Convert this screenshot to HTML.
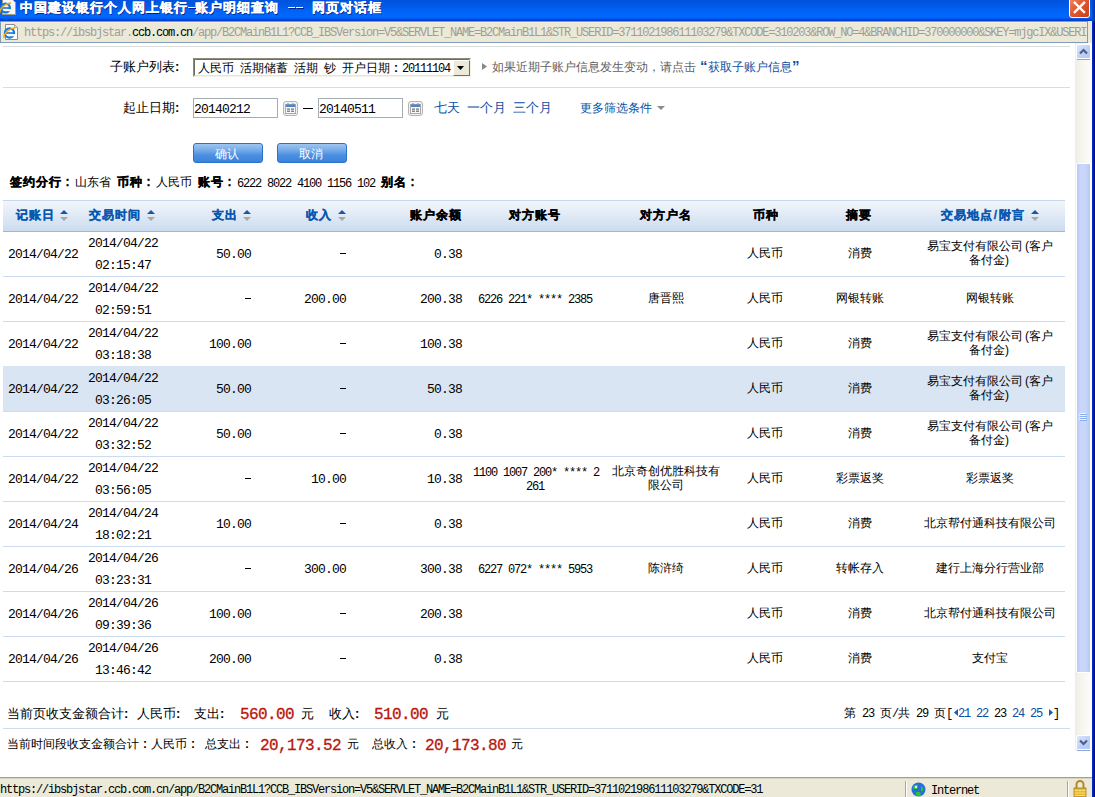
<!DOCTYPE html>
<html><head><meta charset="utf-8"><style>
*{margin:0;padding:0;box-sizing:border-box}
html,body{width:1095px;height:797px;overflow:hidden;background:#fff}
body{position:relative;font-family:'Liberation Sans',sans-serif}
div,span,svg{position:absolute}
span{white-space:pre;line-height:20px;height:20px}
.c{font-size:12px;color:#000}
.cb{font-size:12px;font-weight:bold;letter-spacing:1px;color:#000;-webkit-text-stroke:0.3px currentColor}
.m{font-family:'Liberation Mono',monospace;font-size:12px;letter-spacing:-1.2px;color:#000}
.d{font-family:'Liberation Mono',monospace;font-size:13px;letter-spacing:-0.8px;color:#000}
.ms{font-family:'Liberation Mono',monospace;font-size:12px;letter-spacing:-1.2px;color:#000}
.blue{color:#0b4fa3}
.hb{color:#0a57b0}
i.fc{font-style:normal;display:inline-block;width:1em;text-align:center;font-family:'Liberation Sans',sans-serif;font-weight:bold}
i.fcl{text-align:left}
i.sl{font-style:normal;display:inline-block;width:6px;text-align:center}
i.pl{font-style:normal;display:inline-block;width:6px;text-align:right}
i.pr{font-style:normal;display:inline-block;width:6px;text-align:left}
</style></head><body>
<div style="left:0px;top:0px;width:1095px;height:21px;background:linear-gradient(#0053dc 0px,#0059e6 5px,#0062f3 10px,#0066fc 15px,#0065fb 18px,#0050e4 19px,#003fcc 20px,#003fcc 21px)"></div>
<svg style="left:0;top:0" width="18" height="16" viewBox="0 0 18 16">
<path d="M2.5 -1 L12 -1 L15.5 2.5 L15.5 14.5 L2.5 14.5 Z" fill="#f6f6f2" stroke="#a09a8a" stroke-width="1"/>
<circle cx="5.5" cy="8" r="4.4" fill="none" stroke="#1a78d8" stroke-width="2.2"/>
<rect x="2" y="7.2" width="7.5" height="1.6" fill="#1a78d8"/>
<rect x="7" y="9.2" width="4" height="2" fill="#f6f6f2"/>
<path d="M0 13 C-1 10.5 3 4 11 3" fill="none" stroke="#f0a818" stroke-width="1.5"/>
</svg>
<span style="left:20px;top:-2px;font-size:13px;font-weight:bold;letter-spacing:1px;color:#fff;-webkit-text-stroke:0.35px #fff;text-shadow:1px 1px 0 #0a1e78">中国建设银行个人网上银行</span>
<span style="left:195px;top:-2px;font-size:13px;font-weight:bold;letter-spacing:1px;color:#fff;-webkit-text-stroke:0.35px #fff;text-shadow:1px 1px 0 #0a1e78">账户明细查询</span>
<span style="left:312px;top:-2px;font-size:13px;font-weight:bold;letter-spacing:1px;color:#fff;-webkit-text-stroke:0.35px #fff;text-shadow:1px 1px 0 #0a1e78">网页对话框</span>
<div style="left:189px;top:8px;width:7px;height:1px;background:#0a1e78"></div>
<div style="left:188px;top:7px;width:7px;height:1px;background:#fff"></div>
<div style="left:289px;top:8px;width:7px;height:1px;background:#0a1e78"></div>
<div style="left:288px;top:7px;width:7px;height:1px;background:#fff"></div>
<div style="left:297px;top:8px;width:7px;height:1px;background:#0a1e78"></div>
<div style="left:296px;top:7px;width:7px;height:1px;background:#fff"></div>
<div style="left:1069px;top:-3px;width:21px;height:21px;border:1px solid #fff;border-radius:3px;background:linear-gradient(135deg,#f08a68 0%,#e2582e 45%,#c8401a 100%)"></div>
<svg style="left:1073px;top:1px" width="13" height="13" viewBox="0 0 13 13"><path d="M1.8 1.8 L11 11 M11 1.8 L1.8 11" stroke="#fff" stroke-width="2.4" stroke-linecap="square"/></svg>
<div style="left:1092px;top:0px;width:3px;height:797px;background:linear-gradient(90deg,#0a34d0,#001aa0 50%,#000a80)"></div>
<div style="left:1092px;top:0px;width:3px;height:21px;background:linear-gradient(90deg,#0050e0,#0034b0)"></div>
<div style="left:0px;top:21px;width:1092px;height:22px;background:#ece9d8"></div>
<div style="left:0px;top:21px;width:1088px;height:22px;border:1px solid #7f9db9;background:#ece9d8;border-top-color:#8099b5"></div>
<div style="left:1px;top:22px;width:1086px;height:1px;background:#f2eedf"></div>
<svg style="left:3px;top:24px" width="16" height="17" viewBox="0 0 16 17">
<path d="M2.5 0.5 L11.5 0.5 L14.5 3.5 L14.5 15.5 L2.5 15.5 Z" fill="#fff" stroke="#8c8c8c"/>
<path d="M11.5 0.5 L11.5 3.5 L14.5 3.5" fill="#ddd" stroke="#a8a8a8"/>
<circle cx="6.5" cy="9" r="4.6" fill="none" stroke="#1a78d8" stroke-width="2.2"/>
<rect x="3" y="8.2" width="7.5" height="1.6" fill="#1a78d8"/>
<rect x="8" y="10.2" width="4" height="2" fill="#fff"/>
<path d="M1 14 C0 11.5 4 5 12 4" fill="none" stroke="#f0a818" stroke-width="1.5"/>
</svg>
<span class="m" style="left:24px;top:23px;color:#a09e94">https://ibsbjstar.<b style="font-weight:normal;color:#000">ccb.com.cn</b>/app/B2CMainB1L1?CCB_IBSVersion=V5&amp;SERVLET_NAME=B2CMainB1L1&amp;STR_USERID=371102198611103279&amp;TXCODE=310203&amp;ROW_NO=4&amp;BRANCHID=370000000&amp;SKEY=mjgcIX&amp;USERI</span>
<div style="left:3px;top:46px;width:1067px;height:1px;background:#dcdcdc"></div>
<div style="left:3px;top:87px;width:1067px;height:1px;background:#dcdcdc"></div>
<span class="c" style="left:110px;top:57px;font-size:13px">子账户列表<i class="fc fcl">:</i></span>
<div style="left:193px;top:58px;width:278px;height:19px;border:1px solid;border-color:#8e8b7c #f4f2e8 #f4f2e8 #8e8b7c;background:#fff"></div>
<div style="left:194px;top:59px;width:276px;height:17px;border:1px solid;border-color:#6f6c60 #e8e5d8 #e8e5d8 #6f6c60"></div>
<span class="c" style="left:198px;top:58px;">人民币</span>
<span class="c" style="left:240px;top:58px;">活期储蓄</span>
<span class="c" style="left:294px;top:58px;">活期</span>
<span class="c" style="left:324px;top:58px;">钞</span>
<span class="c" style="left:342px;top:58px;">开户日期<i class="fc">:</i></span>
<span class="m" style="left:402px;top:59px;">20111104</span>
<div style="left:453px;top:60px;width:17px;height:16px;background:#ece9d8;border:1px solid;border-color:#fff #716f64 #716f64 #fff"></div>
<svg style="left:457px;top:66px" width="7" height="4" viewBox="0 0 7 4"><path d="M0 0 H7 L3.5 4 Z" fill="#000"/></svg>
<svg style="left:482px;top:63px" width="6" height="7" viewBox="0 0 6 7"><path d="M0 0 L5 3.5 L0 7 Z" fill="#888"/></svg>
<span class="c" style="left:492px;top:57px;color:#606060">如果近期子账户信息发生变动，请点击</span>
<span class="c blue" style="left:700px;top:56px;font-size:15px;font-weight:bold">“</span>
<span class="c blue" style="left:708px;top:57px;">获取子账户信息</span>
<span class="c blue" style="left:792px;top:56px;font-size:15px;font-weight:bold">”</span>
<span class="c" style="left:123px;top:98px;font-size:13px">起止日期<i class="fc fcl">:</i></span>
<div style="left:193px;top:98px;width:85px;height:20px;border:1px solid #a5acb2;background:#fff"></div>
<span class="d" style="left:194px;top:100px;">20140212</span>
<div style="left:318px;top:98px;width:85px;height:20px;border:1px solid #a5acb2;background:#fff"></div>
<span class="d" style="left:319px;top:100px;">20140511</span>
<svg style="left:283px;top:101px" width="15" height="15" viewBox="0 0 15 15">
<rect x="0.5" y="0.5" width="14" height="14" rx="2.5" fill="#f2f2f2" stroke="#b4b4b4"/>
<rect x="2.5" y="3.5" width="10" height="9" fill="#fafafa" stroke="#a8a8a8" stroke-width="1"/>
<rect x="3" y="3.5" width="9" height="2.5" fill="#4a86d0"/>
<rect x="4.5" y="2" width="1" height="1.5" fill="#888"/><rect x="9.5" y="2" width="1" height="1.5" fill="#888"/>
<rect x="4" y="7.5" width="3" height="1.2" fill="#6a6a6a"/><rect x="8" y="7.5" width="3" height="1.2" fill="#6a6a6a"/>
<rect x="4" y="9.6" width="3" height="1.2" fill="#6a6a6a"/><rect x="8" y="9.6" width="3" height="1.2" fill="#6a6a6a"/>
</svg>
<svg style="left:408px;top:101px" width="15" height="15" viewBox="0 0 15 15">
<rect x="0.5" y="0.5" width="14" height="14" rx="2.5" fill="#f2f2f2" stroke="#b4b4b4"/>
<rect x="2.5" y="3.5" width="10" height="9" fill="#fafafa" stroke="#a8a8a8" stroke-width="1"/>
<rect x="3" y="3.5" width="9" height="2.5" fill="#4a86d0"/>
<rect x="4.5" y="2" width="1" height="1.5" fill="#888"/><rect x="9.5" y="2" width="1" height="1.5" fill="#888"/>
<rect x="4" y="7.5" width="3" height="1.2" fill="#6a6a6a"/><rect x="8" y="7.5" width="3" height="1.2" fill="#6a6a6a"/>
<rect x="4" y="9.6" width="3" height="1.2" fill="#6a6a6a"/><rect x="8" y="9.6" width="3" height="1.2" fill="#6a6a6a"/>
</svg>
<div style="left:303px;top:108px;width:10px;height:1px;background:#000"></div>
<span class="c blue" style="left:434px;top:98px;font-size:13px">七天</span>
<span class="c blue" style="left:467px;top:98px;font-size:13px">一个月</span>
<span class="c blue" style="left:513px;top:98px;font-size:13px">三个月</span>
<span class="c blue" style="left:580px;top:98px;">更多筛选条件</span>
<svg style="left:657px;top:106px" width="8" height="5" viewBox="0 0 8 5"><path d="M0 0 H8 L4 4 Z" fill="#8a8a8a"/></svg>
<div style="left:193px;top:143px;width:70px;height:20px;border:1px solid #2b73c8;border-radius:3px;background:linear-gradient(#a0c6f0 0%,#6ea6e8 40%,#4d90e2 60%,#3b82dc 100%)"></div>
<span class="c" style="left:215px;top:144px;color:#fff">确认</span>
<div style="left:277px;top:143px;width:70px;height:20px;border:1px solid #2b73c8;border-radius:3px;background:linear-gradient(#a0c6f0 0%,#6ea6e8 40%,#4d90e2 60%,#3b82dc 100%)"></div>
<span class="c" style="left:299px;top:144px;color:#fff">取消</span>
<span class="cb" style="left:10px;top:172px;">签约分行<i class="fc">:</i></span>
<span class="c" style="left:75px;top:172px;">山东省</span>
<span class="cb" style="left:117px;top:172px;">币种<i class="fc">:</i></span>
<span class="c" style="left:156px;top:172px;">人民币</span>
<span class="cb" style="left:198px;top:172px;">账号<i class="fc">:</i></span>
<span class="ms" style="left:237px;top:174px;">6222 8022 4100 1156 102</span>
<span class="cb" style="left:381px;top:172px;">别名<i class="fc">:</i></span>
<div style="left:3px;top:200px;width:1062px;height:1px;background:#c5d7ed"></div>
<div style="left:3px;top:201px;width:1062px;height:30px;background:linear-gradient(#f3f6fb,#cbdcef)"></div>
<div style="left:3px;top:231px;width:1062px;height:1px;background:#a6b6cb"></div>
<span class="cb hb" style="left:16px;top:205px;">记账日</span>
<svg style="left:60px;top:209px" width="8" height="12" viewBox="0 0 8 12"><path d="M0 5 L4 1 L8 5 Z" fill="#1558a8"/><path d="M0 8 L8 8 L4 12 Z" fill="#a8a8a8"/></svg>
<span class="cb hb" style="left:89px;top:205px;">交易时间</span>
<svg style="left:147px;top:209px" width="8" height="12" viewBox="0 0 8 12"><path d="M0 5 L4 1 L8 5 Z" fill="#1558a8"/><path d="M0 8 L8 8 L4 12 Z" fill="#a8a8a8"/></svg>
<span class="cb hb" style="left:212px;top:205px;">支出</span>
<svg style="left:243px;top:209px" width="8" height="12" viewBox="0 0 8 12"><path d="M0 5 L4 1 L8 5 Z" fill="#1558a8"/><path d="M0 8 L8 8 L4 12 Z" fill="#a8a8a8"/></svg>
<span class="cb hb" style="left:306px;top:205px;">收入</span>
<svg style="left:338px;top:209px" width="8" height="12" viewBox="0 0 8 12"><path d="M0 5 L4 1 L8 5 Z" fill="#1558a8"/><path d="M0 8 L8 8 L4 12 Z" fill="#a8a8a8"/></svg>
<span class="cb" style="left:410px;top:205px;">账户余额</span>
<span class="cb" style="left:509px;top:205px;">对方账号</span>
<span class="cb" style="left:640px;top:205px;">对方户名</span>
<span class="cb" style="left:753px;top:205px;">币种</span>
<span class="cb" style="left:846px;top:205px;">摘要</span>
<span class="cb hb" style="left:941px;top:205px;">交易地点<i class="sl">/</i>附言</span>
<svg style="left:1031px;top:209px" width="8" height="12" viewBox="0 0 8 12"><path d="M0 5 L4 1 L8 5 Z" fill="#1558a8"/><path d="M0 8 L8 8 L4 12 Z" fill="#a8a8a8"/></svg>
<div style="left:3px;top:276px;width:1062px;height:1px;background:#cadbf2"></div>
<span class="d" style="left:8px;top:245px;">2014/04/22</span>
<span class="d" style="left:88px;top:234px;">2014/04/22</span>
<span class="d" style="left:95px;top:256px;">02:15:47</span>
<span class="d" style="left:131px;width:120px;text-align:right;top:245px;">50.00</span>
<div style="left:340px;top:253px;width:6px;height:1px;background:#000"></div>
<span class="d" style="left:342px;width:120px;text-align:right;top:245px;">0.38</span>
<span class="c" style="left:735.0px;width:60px;text-align:center;top:243px;">人民币</span>
<span class="c" style="left:830.0px;width:60px;text-align:center;top:243px;">消费</span>
<span class="c" style="left:915.0px;width:150px;text-align:center;top:236px;">易宝支付有限公司<i class="pl">(</i>客户</span>
<span class="c" style="left:915.0px;width:150px;text-align:center;top:250px;">备付金<i class="pr">)</i></span>
<div style="left:3px;top:321px;width:1062px;height:1px;background:#cadbf2"></div>
<span class="d" style="left:8px;top:290px;">2014/04/22</span>
<span class="d" style="left:88px;top:279px;">2014/04/22</span>
<span class="d" style="left:95px;top:301px;">02:59:51</span>
<div style="left:245px;top:298px;width:6px;height:1px;background:#000"></div>
<span class="d" style="left:226px;width:120px;text-align:right;top:290px;">200.00</span>
<span class="d" style="left:342px;width:120px;text-align:right;top:290px;">200.38</span>
<span class="ms" style="left:465.0px;width:140px;text-align:center;top:290px;">6226 221* **** 2385</span>
<span class="c" style="left:601.0px;width:130px;text-align:center;top:288px;">唐晋熙</span>
<span class="c" style="left:735.0px;width:60px;text-align:center;top:288px;">人民币</span>
<span class="c" style="left:830.0px;width:60px;text-align:center;top:288px;">网银转账</span>
<span class="c" style="left:915.0px;width:150px;text-align:center;top:288px;">网银转账</span>
<div style="left:3px;top:366px;width:1062px;height:1px;background:#cadbf2"></div>
<span class="d" style="left:8px;top:335px;">2014/04/22</span>
<span class="d" style="left:88px;top:324px;">2014/04/22</span>
<span class="d" style="left:95px;top:346px;">03:18:38</span>
<span class="d" style="left:131px;width:120px;text-align:right;top:335px;">100.00</span>
<div style="left:340px;top:343px;width:6px;height:1px;background:#000"></div>
<span class="d" style="left:342px;width:120px;text-align:right;top:335px;">100.38</span>
<span class="c" style="left:735.0px;width:60px;text-align:center;top:333px;">人民币</span>
<span class="c" style="left:830.0px;width:60px;text-align:center;top:333px;">消费</span>
<span class="c" style="left:915.0px;width:150px;text-align:center;top:326px;">易宝支付有限公司<i class="pl">(</i>客户</span>
<span class="c" style="left:915.0px;width:150px;text-align:center;top:340px;">备付金<i class="pr">)</i></span>
<div style="left:3px;top:366px;width:1062px;height:46px;background:#d9e5f3"></div>
<div style="left:3px;top:411px;width:1062px;height:1px;background:#cadbf2"></div>
<span class="d" style="left:8px;top:380px;">2014/04/22</span>
<span class="d" style="left:88px;top:369px;">2014/04/22</span>
<span class="d" style="left:95px;top:391px;">03:26:05</span>
<span class="d" style="left:131px;width:120px;text-align:right;top:380px;">50.00</span>
<div style="left:340px;top:388px;width:6px;height:1px;background:#000"></div>
<span class="d" style="left:342px;width:120px;text-align:right;top:380px;">50.38</span>
<span class="c" style="left:735.0px;width:60px;text-align:center;top:378px;">人民币</span>
<span class="c" style="left:830.0px;width:60px;text-align:center;top:378px;">消费</span>
<span class="c" style="left:915.0px;width:150px;text-align:center;top:371px;">易宝支付有限公司<i class="pl">(</i>客户</span>
<span class="c" style="left:915.0px;width:150px;text-align:center;top:385px;">备付金<i class="pr">)</i></span>
<div style="left:3px;top:456px;width:1062px;height:1px;background:#cadbf2"></div>
<span class="d" style="left:8px;top:425px;">2014/04/22</span>
<span class="d" style="left:88px;top:414px;">2014/04/22</span>
<span class="d" style="left:95px;top:436px;">03:32:52</span>
<span class="d" style="left:131px;width:120px;text-align:right;top:425px;">50.00</span>
<div style="left:340px;top:433px;width:6px;height:1px;background:#000"></div>
<span class="d" style="left:342px;width:120px;text-align:right;top:425px;">0.38</span>
<span class="c" style="left:735.0px;width:60px;text-align:center;top:423px;">人民币</span>
<span class="c" style="left:830.0px;width:60px;text-align:center;top:423px;">消费</span>
<span class="c" style="left:915.0px;width:150px;text-align:center;top:416px;">易宝支付有限公司<i class="pl">(</i>客户</span>
<span class="c" style="left:915.0px;width:150px;text-align:center;top:430px;">备付金<i class="pr">)</i></span>
<div style="left:3px;top:501px;width:1062px;height:1px;background:#cadbf2"></div>
<span class="d" style="left:8px;top:470px;">2014/04/22</span>
<span class="d" style="left:88px;top:459px;">2014/04/22</span>
<span class="d" style="left:95px;top:481px;">03:56:05</span>
<div style="left:245px;top:478px;width:6px;height:1px;background:#000"></div>
<span class="d" style="left:226px;width:120px;text-align:right;top:470px;">10.00</span>
<span class="d" style="left:342px;width:120px;text-align:right;top:470px;">10.38</span>
<span class="ms" style="left:466.0px;width:140px;text-align:center;top:463px;">1100 1007 200* **** 2</span>
<span class="ms" style="left:465.0px;width:140px;text-align:center;top:477px;">261</span>
<span class="c" style="left:601.0px;width:130px;text-align:center;top:461px;">北京奇创优胜科技有</span>
<span class="c" style="left:601.0px;width:130px;text-align:center;top:475px;">限公司</span>
<span class="c" style="left:735.0px;width:60px;text-align:center;top:468px;">人民币</span>
<span class="c" style="left:830.0px;width:60px;text-align:center;top:468px;">彩票返奖</span>
<span class="c" style="left:915.0px;width:150px;text-align:center;top:468px;">彩票返奖</span>
<div style="left:3px;top:546px;width:1062px;height:1px;background:#cadbf2"></div>
<span class="d" style="left:8px;top:515px;">2014/04/24</span>
<span class="d" style="left:88px;top:504px;">2014/04/24</span>
<span class="d" style="left:95px;top:526px;">18:02:21</span>
<span class="d" style="left:131px;width:120px;text-align:right;top:515px;">10.00</span>
<div style="left:340px;top:523px;width:6px;height:1px;background:#000"></div>
<span class="d" style="left:342px;width:120px;text-align:right;top:515px;">0.38</span>
<span class="c" style="left:735.0px;width:60px;text-align:center;top:513px;">人民币</span>
<span class="c" style="left:830.0px;width:60px;text-align:center;top:513px;">消费</span>
<span class="c" style="left:915.0px;width:150px;text-align:center;top:513px;">北京帮付通科技有限公司</span>
<div style="left:3px;top:591px;width:1062px;height:1px;background:#cadbf2"></div>
<span class="d" style="left:8px;top:560px;">2014/04/26</span>
<span class="d" style="left:88px;top:549px;">2014/04/26</span>
<span class="d" style="left:95px;top:571px;">03:23:31</span>
<div style="left:245px;top:568px;width:6px;height:1px;background:#000"></div>
<span class="d" style="left:226px;width:120px;text-align:right;top:560px;">300.00</span>
<span class="d" style="left:342px;width:120px;text-align:right;top:560px;">300.38</span>
<span class="ms" style="left:465.0px;width:140px;text-align:center;top:560px;">6227 072* **** 5953</span>
<span class="c" style="left:601.0px;width:130px;text-align:center;top:558px;">陈浒绮</span>
<span class="c" style="left:735.0px;width:60px;text-align:center;top:558px;">人民币</span>
<span class="c" style="left:830.0px;width:60px;text-align:center;top:558px;">转帐存入</span>
<span class="c" style="left:915.0px;width:150px;text-align:center;top:558px;">建行上海分行营业部</span>
<div style="left:3px;top:636px;width:1062px;height:1px;background:#cadbf2"></div>
<span class="d" style="left:8px;top:605px;">2014/04/26</span>
<span class="d" style="left:88px;top:594px;">2014/04/26</span>
<span class="d" style="left:95px;top:616px;">09:39:36</span>
<span class="d" style="left:131px;width:120px;text-align:right;top:605px;">100.00</span>
<div style="left:340px;top:613px;width:6px;height:1px;background:#000"></div>
<span class="d" style="left:342px;width:120px;text-align:right;top:605px;">200.38</span>
<span class="c" style="left:735.0px;width:60px;text-align:center;top:603px;">人民币</span>
<span class="c" style="left:830.0px;width:60px;text-align:center;top:603px;">消费</span>
<span class="c" style="left:915.0px;width:150px;text-align:center;top:603px;">北京帮付通科技有限公司</span>
<div style="left:3px;top:681px;width:1062px;height:1px;background:#cadbf2"></div>
<span class="d" style="left:8px;top:650px;">2014/04/26</span>
<span class="d" style="left:88px;top:639px;">2014/04/26</span>
<span class="d" style="left:95px;top:661px;">13:46:42</span>
<span class="d" style="left:131px;width:120px;text-align:right;top:650px;">200.00</span>
<div style="left:340px;top:658px;width:6px;height:1px;background:#000"></div>
<span class="d" style="left:342px;width:120px;text-align:right;top:650px;">0.38</span>
<span class="c" style="left:735.0px;width:60px;text-align:center;top:648px;">人民币</span>
<span class="c" style="left:830.0px;width:60px;text-align:center;top:648px;">消费</span>
<span class="c" style="left:915.0px;width:150px;text-align:center;top:648px;">支付宝</span>
<span class="c" style="left:7px;top:704px;font-size:13px">当前页收支金额合计<i class="fc fcl">:</i>人民币<i class="fc fcl">:</i></span>
<span class="c" style="left:194px;top:704px;font-size:13px">支出<i class="fc fcl">:</i></span>
<span class="d" style="left:240px;top:705px;font-size:16px;letter-spacing:-0.6px;color:#b8160c;-webkit-text-stroke:0.3px #b8160c">560.00</span>
<span class="c" style="left:301px;top:704px;font-size:13px">元</span>
<span class="c" style="left:329px;top:704px;font-size:13px">收入<i class="fc fcl">:</i></span>
<span class="d" style="left:374px;top:705px;font-size:16px;letter-spacing:-0.6px;color:#b8160c;-webkit-text-stroke:0.3px #b8160c">510.00</span>
<span class="c" style="left:436px;top:704px;font-size:13px">元</span>
<span class="c" style="left:844px;top:703px;">第</span>
<span class="m" style="left:862px;top:704px;">23</span>
<span class="c" style="left:880px;top:703px;">页</span>
<span class="m" style="left:892px;top:704px;">/</span>
<span class="c" style="left:898px;top:703px;">共</span>
<span class="m" style="left:916px;top:704px;">29</span>
<span class="c" style="left:934px;top:703px;">页</span>
<span class="m" style="left:946px;top:704px;">[</span>
<svg style="left:954px;top:709px" width="5" height="7" viewBox="0 0 5 7"><path d="M4 0 L0 3.5 L4 7 Z" fill="#1a5aa8"/></svg>
<span class="m blue" style="left:958px;top:704px;">21</span>
<span class="m blue" style="left:976px;top:704px;">22</span>
<span class="m" style="left:994px;top:704px;">23</span>
<span class="m blue" style="left:1012px;top:704px;">24</span>
<span class="m blue" style="left:1030px;top:704px;">25</span>
<svg style="left:1049px;top:709px" width="5" height="7" viewBox="0 0 5 7"><path d="M0 0 L4 3.5 L0 7 Z" fill="#1a5aa8"/></svg>
<span class="m" style="left:1053px;top:704px;">]</span>
<div style="left:3px;top:728px;width:1067px;height:1px;background:#cfdcee"></div>
<span class="c" style="left:7px;top:734px;">当前时间段收支金额合计<i class="fc">:</i>人民币<i class="fc">:</i></span>
<span class="c" style="left:205px;top:734px;">总支出<i class="fc">:</i></span>
<span class="d" style="left:260px;top:736px;font-size:16px;letter-spacing:-0.6px;color:#b8160c;-webkit-text-stroke:0.3px #b8160c">20,173.52</span>
<span class="c" style="left:347px;top:734px;">元</span>
<span class="c" style="left:372px;top:734px;">总收入<i class="fc">:</i></span>
<span class="d" style="left:425px;top:736px;font-size:16px;letter-spacing:-0.6px;color:#b8160c;-webkit-text-stroke:0.3px #b8160c">20,173.80</span>
<span class="c" style="left:511px;top:734px;">元</span>
<div style="left:1075px;top:43px;width:17px;height:734px;background:linear-gradient(90deg,#eeede5,#f6f5f0 40%,#fdfdfa)"></div>
<div style="left:1075px;top:751px;width:17px;height:26px;background:#fff"></div>
<div style="left:1075px;top:43px;width:1px;height:708px;background:#f0efe6"></div>
<div style="left:1076px;top:44px;width:15px;height:15px;border:1px solid #fff;border-radius:2px;background:linear-gradient(135deg,#dde6fc,#bccdf8 60%,#b4c8f6)"></div>
<div style="left:1077px;top:59px;width:13px;height:1px;background:#8aa6dc"></div>
<svg style="left:1079px;top:48px" width="9" height="7" viewBox="0 0 9 7"><path d="M1 5.5 L4.5 2 L8 5.5" fill="none" stroke="#4d6185" stroke-width="2.2"/></svg>
<div style="left:1076px;top:735px;width:15px;height:15px;border:1px solid #fff;border-radius:2px;background:linear-gradient(135deg,#dde6fc,#bccdf8 60%,#b4c8f6)"></div>
<div style="left:1077px;top:750px;width:13px;height:1px;background:#8aa6dc"></div>
<svg style="left:1079px;top:739px" width="9" height="7" viewBox="0 0 9 7"><path d="M1 1.5 L4.5 5 L8 1.5" fill="none" stroke="#4d6185" stroke-width="2.2"/></svg>
<div style="left:1076px;top:163px;width:15px;height:510px;border:1px solid #fff;border-radius:2px;background:linear-gradient(90deg,#b7c9f5,#c9d7fa 30%,#c6d5f9 70%,#b4c8f5)"></div>
<div style="left:1080px;top:414px;width:7px;height:1px;background:#8bb0f0"></div>
<div style="left:1079px;top:413px;width:7px;height:1px;background:#eef3fd"></div>
<div style="left:1080px;top:416px;width:7px;height:1px;background:#8bb0f0"></div>
<div style="left:1079px;top:415px;width:7px;height:1px;background:#eef3fd"></div>
<div style="left:1080px;top:418px;width:7px;height:1px;background:#8bb0f0"></div>
<div style="left:1079px;top:417px;width:7px;height:1px;background:#eef3fd"></div>
<div style="left:1080px;top:420px;width:7px;height:1px;background:#8bb0f0"></div>
<div style="left:1079px;top:419px;width:7px;height:1px;background:#eef3fd"></div>
<div style="left:0px;top:777px;width:1092px;height:20px;background:#ece9d8"></div>
<div style="left:0px;top:777px;width:1092px;height:1px;background:#a2a08e"></div>
<div style="left:0px;top:778px;width:1092px;height:1px;background:#d8d4c0"></div>
<span class="m" style="left:0px;top:780px;">https://ibsbjstar.ccb.com.cn/app/B2CMainB1L1?CCB_IBSVersion=V5&amp;SERVLET_NAME=B2CMainB1L1&amp;STR_USERID=371102198611103279&amp;TXCODE=31</span>
<div style="left:905px;top:781px;width:1px;height:16px;background:#aca899"></div>
<div style="left:906px;top:781px;width:1px;height:16px;background:#fff"></div>
<div style="left:1067px;top:781px;width:1px;height:16px;background:#aca899"></div>
<div style="left:1068px;top:781px;width:1px;height:16px;background:#fff"></div>
<svg style="left:911px;top:782px" width="15" height="15" viewBox="0 0 15 15">
<circle cx="7.5" cy="7.5" r="7" fill="#2a6fd8"/>
<path d="M2 5 Q4 2 7 3 L6 7 L2 7 Z" fill="#2fc03a"/>
<path d="M10 4 Q13 6 12 9 L10 9 Z" fill="#2fc03a"/>
<path d="M5 10 L9 10 L10 14 Q7 15 5 13 Z" fill="#2fc03a"/>
<circle cx="5" cy="5" r="1.2" fill="#dff"/>
</svg>
<span class="m" style="left:931px;top:781px;">Internet</span>
<svg style="left:1073px;top:780px" width="14" height="17" viewBox="0 0 14 17">
<path d="M3.5 8 V4.5 A3.5 3.5 0 0 1 10.5 4.5 V8" fill="none" stroke="#b08a2a" stroke-width="2"/>
<rect x="1" y="8" width="12" height="9" fill="#e8b830" stroke="#a07818" stroke-width="0.8"/>
<rect x="1.5" y="10" width="11" height="1" fill="#f8dc70"/><rect x="1.5" y="12.5" width="11" height="1" fill="#f8dc70"/><rect x="1.5" y="15" width="11" height="1" fill="#f8dc70"/>
</svg>
</body></html>
